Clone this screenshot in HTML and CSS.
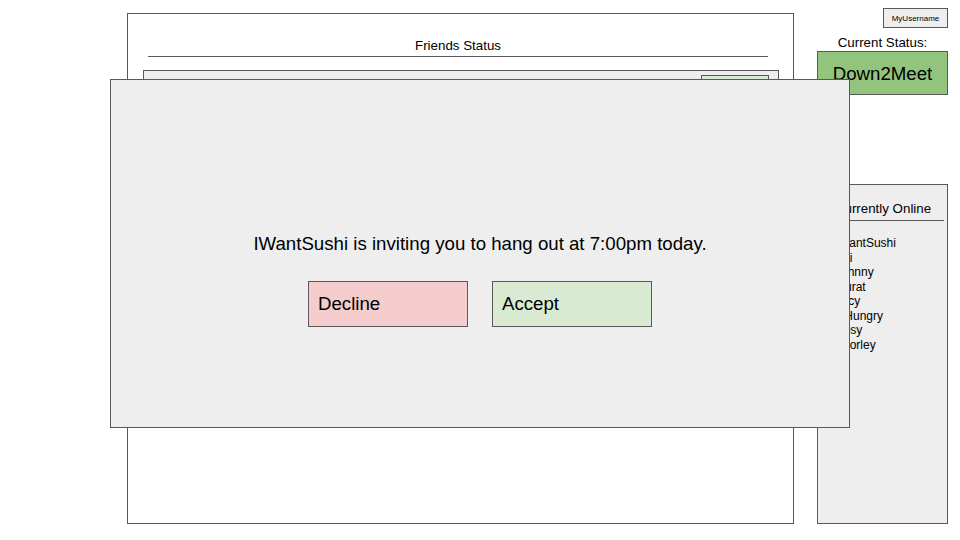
FILE: index.html
```html
<!DOCTYPE html>
<html>
<head>
<meta charset="utf-8">
<link rel="stylesheet" href="styles.css">
</head>
<body>
<div class="page">
  <section class="friends">
    <div class="friends-title">Friends Status</div>
    <div class="friend-row">
      <span class="friend-text">IWantSushi is inviting you to hang out at 7:00pm today.</span>
      <span class="friend-btn"></span>
    </div>
  </section>
  <aside class="side">
    <button class="user-btn">MyUsername</button>
    <div class="status-label">Current Status:</div>
    <div class="status-box">Down2Meet</div>
    <div class="online">
      <div class="online-title">Currently Online</div>
      <ul class="online-list">
        <li>IWantSushi</li>
        <li>Kai</li>
        <li>Johnny</li>
        <li>Murat</li>
        <li>Lucy</li>
        <li>IsHungry</li>
        <li>Rosy</li>
        <li>Shorley</li>
      </ul>
    </div>
  </aside>
</div>
<div class="modal">
  <p class="modal-text">IWantSushi is inviting you to hang out at 7:00pm today.</p>
  <div class="modal-actions">
    <button class="action decline">Decline</button>
    <button class="action accept">Accept</button>
  </div>
</div>
</body>
</html>
```
FILE: styles.css
```css
html, body {
  margin: 0;
  padding: 0;
  background: #ffffff;
  width: 960px;
  height: 540px;
  overflow: hidden;
  font-family: "Liberation Sans", Arial, sans-serif;
  color: #000;
}

.page {
  display: flex;
  align-items: flex-start;
  padding-left: 127px;
  gap: 23px;
}

.friends {
  box-sizing: border-box;
  margin-top: 13px;
  width: 667px;
  height: 511px;
  border: 1px solid #595959;
  background: #fff;
}

.friends-title {
  margin: 24px 0 0 20px;
  width: 620px;
  height: 18px;
  border-bottom: 1px solid #595959;
  text-align: center;
  font-size: 13.33px;
  line-height: 15px;
}

.friend-row {
  box-sizing: border-box;
  margin: 13px 0 0 15px;
  width: 636px;
  height: 60px;
  border: 1px solid #595959;
  background: #eeeeee;
  display: flex;
  align-items: flex-start;
  justify-content: space-between;
  padding: 4px 9px 0 13px;
}

.friend-text {
  font-size: 11px;
  line-height: 13px;
  margin-top: 4px;
  color: #999;
}

.friend-btn {
  display: block;
  box-sizing: border-box;
  width: 68px;
  height: 30px;
  border: 1px solid #595959;
  background: #d9ead3;
}

.side {
  width: 131px;
  display: flex;
  flex-direction: column;
}

.user-btn {
  align-self: flex-end;
  box-sizing: border-box;
  margin-top: 8px;
  width: 65px;
  height: 20px;
  padding: 0;
  border: 1px solid #595959;
  background: #eeeeee;
  font-family: "Liberation Sans", Arial, sans-serif;
  font-size: 8px;
  color: #000;
}

.status-label {
  margin-top: 7px;
  text-align: center;
  font-size: 13.33px;
  line-height: 15px;
}

.status-box {
  box-sizing: border-box;
  margin-top: 1px;
  height: 44px;
  padding-top: 2px;
  border: 1px solid #595959;
  background: #93c47d;
  font-size: 18.67px;
  display: flex;
  align-items: center;
  justify-content: center;
}

.online {
  box-sizing: border-box;
  margin-top: 89px;
  height: 340px;
  border: 1px solid #595959;
  background: #eeeeee;
}

.online-title {
  margin: 16px 3px 0 4px;
  height: 19px;
  border-bottom: 1px solid #595959;
  text-align: center;
  font-size: 13.33px;
  line-height: 15px;
}

.online-list {
  list-style: none;
  margin: 15px 0 0 0;
  padding: 0 0 0 17px;
  font-size: 12px;
  line-height: 14.5px;
}

.modal {
  position: absolute;
  left: 110px;
  top: 79px;
  box-sizing: border-box;
  width: 740px;
  height: 349px;
  border: 1px solid #595959;
  background: #eeeeee;
  display: flex;
  flex-direction: column;
  align-items: center;
}

.modal-text {
  margin: 153px 0 0 0;
  font-size: 18.67px;
  line-height: 21px;
}

.modal-actions {
  margin-top: 27px;
  display: flex;
  gap: 24px;
}

.action {
  box-sizing: border-box;
  width: 160px;
  height: 46px;
  border: 1px solid #595959;
  padding: 0 0 0 9px;
  text-align: left;
  font-family: "Liberation Sans", Arial, sans-serif;
  font-size: 18.67px;
  color: #000;
}

.decline { background: #f4cccc; }
.accept { background: #d9ead3; }
```
